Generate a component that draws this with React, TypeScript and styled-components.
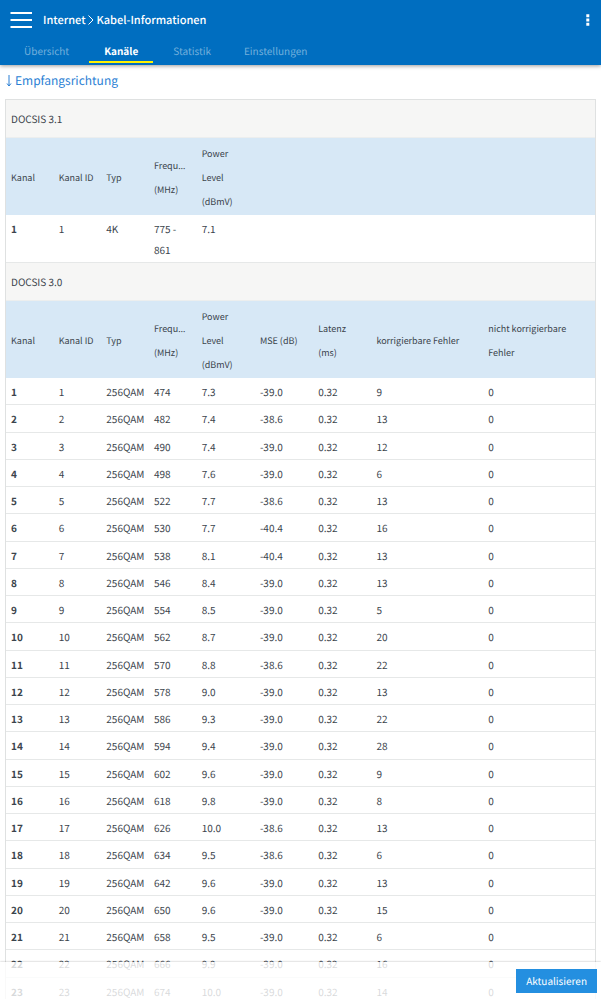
import React from "react";
import styled, { createGlobalStyle } from "styled-components";

const textFont = `"Noto Sans CJK SC", "Noto Sans", sans-serif`;

const GlobalStyle = createGlobalStyle`
  *, *::before, *::after { box-sizing: border-box; }
  body {
    margin: 0;
    background: #fff;
    color: #3b444c;
    font-family: ${textFont};
    font-size: 10px;
    text-rendering: geometricPrecision;
  }
  button { font-family: inherit; border: 0; padding: 0; cursor: pointer; text-rendering: inherit; }
`;

const Page = styled.div`
  position: relative;
  display: flex;
  flex-direction: column;
  height: 100vh;
  overflow: hidden;
`;

const Header = styled.header`
  flex: none;
  z-index: 1;
  background: #006ec0;
  box-shadow: 0 1px 4px rgba(0, 0, 0, 0.4);
`;

const TitleBar = styled.div`
  display: flex;
  align-items: center;
  height: 40px;
  padding: 0 8px 0 10px;
`;

const IconButton = styled.button`
  display: flex;
  background: none;
  color: #fff;
`;

const Breadcrumb = styled.nav`
  display: flex;
  flex: 1;
  align-items: center;
  gap: 1px;
  margin-left: 10px;
  color: #fff;
  font-size: 11px;
  font-weight: 500;
  line-height: 16px;

  a { color: inherit; text-decoration: none; }
`;

const Tabs = styled.nav`
  display: flex;
  gap: 7px;
  height: 23px;
  margin-bottom: 2px;
  padding: 0 8px 0 11px;
`;

const Tab = styled.a<{ $active?: boolean }>`
  padding: 0 ${(p) => (p.$active ? 15 : 13)}px;
  border-bottom: 2px solid ${(p) => (p.$active ? "#fff200" : "transparent")};
  color: ${(p) => (p.$active ? "#fff" : "#73b0dc")};
  font-size: 10px;
  font-weight: ${(p) => (p.$active ? 700 : 400)};
  line-height: 22px;
  text-decoration: none;
`;

const Content = styled.main`
  flex: 1;
  min-height: 0;
  padding: 0 5px 37px;
  overflow-y: auto;
  scrollbar-width: none;
`;

const Heading = styled.h1`
  display: flex;
  align-items: center;
  gap: 2px;
  height: 34px;
  margin: 0;
  padding-bottom: 4px;
  color: #2b7fd4;
  font-size: 12px;
  font-weight: 400;
`;

const TableFrame = styled.div`
  border: 1px solid #dfe1e1;
`;

const Table = styled.table`
  width: 100%;
  table-layout: fixed;
  border-spacing: 0;
  text-align: left;
`;

const Column = styled.col<{ $share: number }>`
  width: ${(p) => p.$share}%;
`;

const SectionTitle = styled.th`
  height: 38px;
  padding: 0 5px;
  border-bottom: 1px solid #eceeee;
  background: #f6f6f5;
  font-weight: 400;
`;

const HeadCell = styled.th`
  height: 77px;
  padding: 2px 7px 0 5px;
  overflow: hidden;
  background: #d7e8f6;
  font-family: "Noto Sans", sans-serif;
  font-size: 9px;
  font-weight: 400;
  line-height: 24px;
  text-overflow: ellipsis;
`;

const HeadLabel = styled.span`
  font-family: ${textFont};
  line-height: 1;
`;

const Row = styled.tr`
  th, td {
    height: 27px;
    padding: 3px 0 2px 5px;
    border-bottom: 1px solid #e6e8e8;
    line-height: 21px;
    vertical-align: top;
  }
  &:nth-child(4n + 2) > * { height: 28px; }
`;

const Footer = styled.footer`
  position: absolute;
  right: 0;
  bottom: 0;
  left: 0;
  z-index: 2;
  display: flex;
  align-items: center;
  justify-content: flex-end;
  height: 37px;
  padding: 0 4px;
  background: rgba(255, 255, 255, 0.8);
  box-shadow: 0 0 2px rgba(0, 0, 0, 0.3);
`;

const RefreshButton = styled.button`
  height: 24px;
  padding: 0 10px;
  background: #248fe0;
  color: #fff;
  font-size: 10px;
  font-weight: 400;
`;

const columnShares = [8.1, 8.1, 8.1, 8.1, 9.9, 9.9, 9.9, 19, 19];
const baseHeads = ["Kanal", "Kanal ID", "Typ", "Frequenz (MHz)", "Power Level (dBmV)"];
const errorHeads = ["MSE (dB)", "Latenz (ms)", "korrigierbare Fehler", "nicht korrigierbare Fehler"];

const channels: [number, string, string, number][] = [
  [474, "7.3", "-39.0", 9],
  [482, "7.4", "-38.6", 13],
  [490, "7.4", "-39.0", 12],
  [498, "7.6", "-39.0", 6],
  [522, "7.7", "-38.6", 13],
  [530, "7.7", "-40.4", 16],
  [538, "8.1", "-40.4", 13],
  [546, "8.4", "-39.0", 13],
  [554, "8.5", "-39.0", 5],
  [562, "8.7", "-39.0", 20],
  [570, "8.8", "-38.6", 22],
  [578, "9.0", "-39.0", 13],
  [586, "9.3", "-39.0", 22],
  [594, "9.4", "-39.0", 28],
  [602, "9.6", "-39.0", 9],
  [618, "9.8", "-39.0", 8],
  [626, "10.0", "-38.6", 13],
  [634, "9.5", "-38.6", 6],
  [642, "9.6", "-39.0", 13],
  [650, "9.6", "-39.0", 15],
  [658, "9.5", "-39.0", 6],
  [666, "9.9", "-39.0", 16],
  [674, "10.0", "-39.0", 14],
];

function HeadCells({ labels }: { labels: string[] }) {
  return (
    <>
      {labels.map((label) => (
        <HeadCell key={label} scope="col">
          <HeadLabel>{label}</HeadLabel>
        </HeadCell>
      ))}
    </>
  );
}

export default function App() {
  return (
    <Page lang="de">
      <GlobalStyle />
      <Header>
        <TitleBar>
          <IconButton aria-label="Menü">
            <svg width="23" height="16" viewBox="0 0 23 16" fill="currentColor">
              <path d="M.5 0h21.500v2H.5zM.5 7h21.500v2H.5zM.5 14h21.500v2H.5z" />
            </svg>
          </IconButton>
          <Breadcrumb aria-label="Pfad">
            <a href="#internet">Internet</a>
            <svg width="9" height="12" viewBox="0 0 9 12" fill="none" stroke="currentColor" aria-hidden="true">
              <path d="M2.500 1.500 7 6 2.500 10.500" />
            </svg>
            <a href="#kabel">Kabel-Informationen</a>
          </Breadcrumb>
          <IconButton aria-label="Weitere Optionen">
            <svg width="10" height="14" viewBox="0 0 10 14" fill="currentColor">
              <path d="M3.300 1.300h3v3h-3zM3.300 5.500h3v3h-3zM3.300 9.700h3v3h-3z" />
            </svg>
          </IconButton>
        </TitleBar>
        <Tabs>
          <Tab href="#uebersicht">Übersicht</Tab>
          <Tab href="#kanaele" $active aria-current="page">Kanäle</Tab>
          <Tab href="#statistik">Statistik</Tab>
          <Tab href="#einstellungen">Einstellungen</Tab>
        </Tabs>
      </Header>
      <Content>
        <Heading>
          <svg width="8" height="16" viewBox="0 0 8 16" fill="none" stroke="currentColor" aria-hidden="true">
            <path d="M4 3v11M2 11.500 4 14l2-2.500" />
          </svg>
          Empfangsrichtung
        </Heading>
        <TableFrame>
          <Table>
            <colgroup>
              {columnShares.map((share, i) => (
                <Column key={i} $share={share} />
              ))}
            </colgroup>
            <thead>
              <tr><SectionTitle colSpan={9}>DOCSIS 3.1</SectionTitle></tr>
              <tr>
                <HeadCells labels={baseHeads} />
                <HeadCell as="td" colSpan={4} />
              </tr>
            </thead>
            <tbody>
              <Row>
                <th scope="row">1</th>
                <td>1</td>
                <td>4K</td>
                <td>775 -<br />861</td>
                <td>7.1</td>
                <td colSpan={4} />
              </Row>
            </tbody>
            <tbody>
              <tr><SectionTitle colSpan={9}>DOCSIS 3.0</SectionTitle></tr>
              <tr><HeadCells labels={[...baseHeads, ...errorHeads]} /></tr>
            </tbody>
            <tbody>
              {channels.map(([frequency, power, mse, corrected], i) => (
                <Row key={frequency}>
                  <th scope="row">{i + 1}</th>
                  <td>{i + 1}</td>
                  <td>256QAM</td>
                  <td>{frequency}</td>
                  <td>{power}</td>
                  <td>{mse}</td>
                  <td>0.32</td>
                  <td>{corrected}</td>
                  <td>0</td>
                </Row>
              ))}
            </tbody>
          </Table>
        </TableFrame>
      </Content>
      <Footer>
        <RefreshButton>Aktualisieren</RefreshButton>
      </Footer>
    </Page>
  );
}
